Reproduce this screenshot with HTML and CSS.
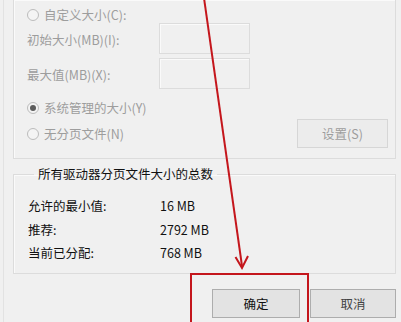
FILE: index.html
```html
<!DOCTYPE html>
<html lang="zh-CN">
<head>
  <meta charset="UTF-8">
  <title>虚拟内存</title>
  <link rel="stylesheet" href="styles.css">
</head>
<body>
  <div class="dialog">
    <div class="group group-top">
      <div class="row row-custom">
        <span class="radio"></span>
        <span class="muted">自定义大小(C):</span>
      </div>
      <div class="row row-field">
        <span class="field-label muted">初始大小(MB)(I):</span>
        <span class="input"></span>
      </div>
      <div class="row row-field row-max">
        <span class="field-label muted">最大值(MB)(X):</span>
        <span class="input"></span>
      </div>
      <div class="row row-system">
        <span class="radio checked"></span>
        <span class="muted">系统管理的大小(Y)</span>
      </div>
      <div class="row row-none">
        <span class="radio"></span>
        <span class="muted">无分页文件(N)</span>
        <button class="btn btn-disabled">设置(S)</button>
      </div>
    </div>

    <fieldset class="group group-total">
      <legend>所有驱动器分页文件大小的总数</legend>
      <div class="stat"><span class="stat-label">允许的最小值:</span><span>16 MB</span></div>
      <div class="stat"><span class="stat-label">推荐:</span><span>2792 MB</span></div>
      <div class="stat"><span class="stat-label">当前已分配:</span><span>768 MB</span></div>
    </fieldset>

    <div class="actions">
      <button class="btn">确定</button>
      <button class="btn btn-cancel">取消</button>
    </div>
  </div>

  <div class="highlight"></div>
  <svg class="arrow" width="401" height="322" viewBox="0 0 401 322">
    <line x1="204" y1="-2" x2="242" y2="266" />
    <polyline points="235.5,257 242,268 248,256" />
  </svg>
</body>
</html>
```

FILE: styles.css
```css
* {
  box-sizing: border-box;
  margin: 0;
  padding: 0;
}

body {
  font-family: "Noto Sans CJK SC", "Noto Sans", sans-serif;
  font-size: 12.5px;
  line-height: 16px;
  color: #111;
  background-color: #f0f0f0;
  width: 401px;
  height: 322px;
  overflow: hidden;
  position: relative;
}

.dialog {
  margin-left: 3px;
  border-left: 1px solid #e2e2e2;
  padding: 0 5px 0 9px;
  height: 322px;
}

.group {
  border: 1px solid #dcdcdc;
  box-shadow: inset 1px 1px 0 #fafafa;
}

.group-top {
  border-top: none;
  padding: 7px 7px 10px 13px;
}

.row {
  display: flex;
  align-items: center;
}

.muted { color: #9d9d9d; }

.radio {
  width: 12px;
  height: 12px;
  border: 1px solid #bcbcbc;
  border-radius: 50%;
  background-color: #f4f4f4;
  margin-right: 5px;
  display: flex;
  justify-content: center;
  align-items: center;
}

.radio.checked::after {
  content: "";
  width: 6px;
  height: 6px;
  border-radius: 50%;
  background-color: #5c5c5c;
}

.row-custom { height: 16px; }

.field-label {
  width: 132px;
  padding-top: 3px;
}

.input {
  width: 91px;
  height: 31px;
  border: 1px solid #dcdcdc;
  box-shadow: inset 1px 1px 0 #fafafa;
}

.row-max { margin-top: 4px; }

.row-system {
  height: 16px;
  margin-top: 11px;
}

.row-none {
  height: 29px;
  margin-top: 3px;
}

.btn {
  font-family: inherit;
  font-size: 12.5px;
  width: 91px;
  height: 29px;
  border: 1px solid #adadad;
  background-color: #e3e3e3;
  color: #111;
}

.btn-disabled {
  margin-left: auto;
  border-color: #d6d6d6;
  background-color: #ececec;
  color: #9d9d9d;
}

.btn-cancel {
  width: 89px;
  color: #444;
}

.group-total {
  margin-top: 7px;
  padding: 12px 0 8px 14px;
  border-top: 1px solid #dcdcdc;
}

.group-total legend {
  margin-left: 6px;
  padding: 0 4px;
  line-height: 16px;
}

.stat {
  display: flex;
  line-height: 23.5px;
}

.stat-label { width: 132px; }

.actions {
  display: flex;
  gap: 10px;
  margin-top: 15px;
  padding-left: 199px;
}

.highlight {
  position: absolute;
  left: 190px;
  top: 273px;
  width: 119px;
  height: 60px;
  border: 2px solid #c4161c;
}

.arrow {
  position: absolute;
  left: 0;
  top: 0;
  fill: none;
  stroke: #c4161c;
  stroke-width: 2;
}
```
